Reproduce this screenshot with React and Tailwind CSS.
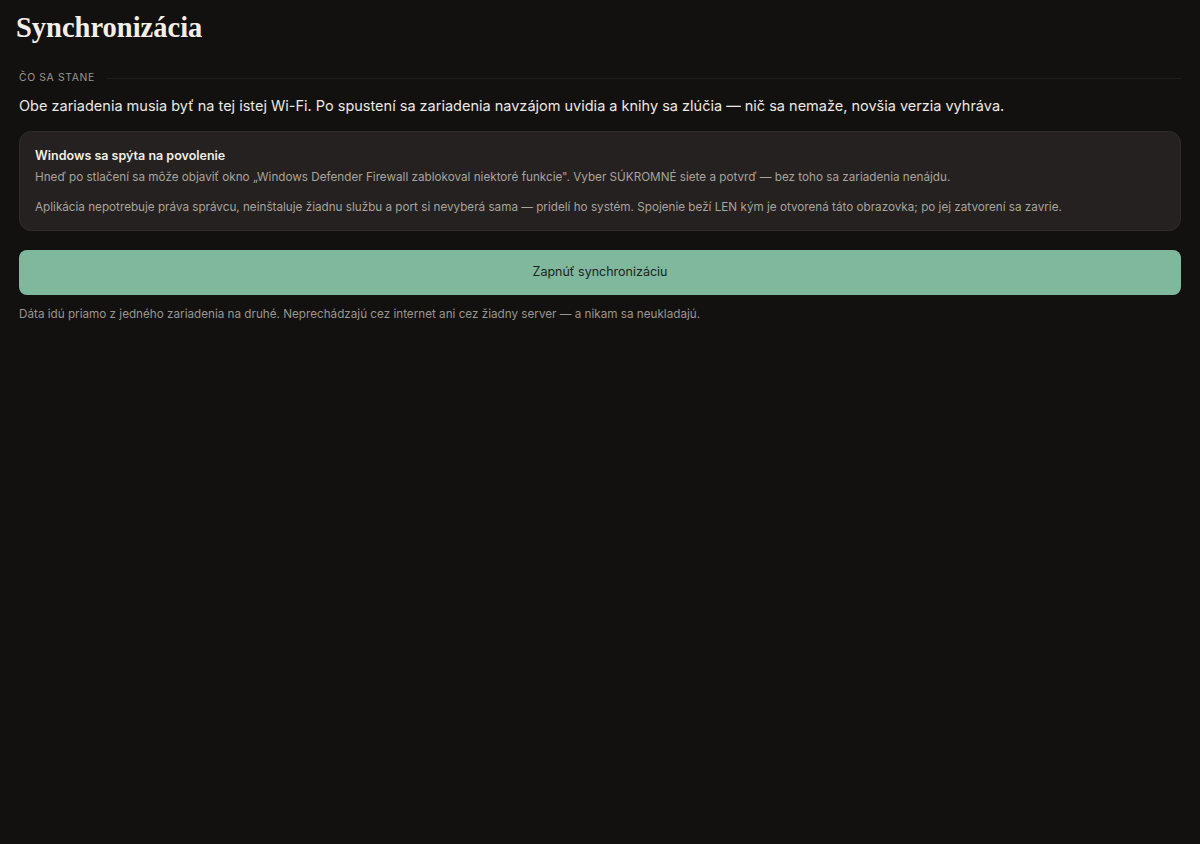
export default function App() {
    const sans = {fontFamily: 'Inter, "Noto Sans", sans-serif'};

    return (
        <div className="min-h-screen bg-[#121110] text-[#ece8e2]" style={sans}>
            <div className="px-[19px] pt-[10px]">
                <h1 className="text-[28.5px] font-bold leading-[36px] -ml-[3px] text-[#f3efe8]"
                    style={{fontFamily: '"Liberation Serif", "DejaVu Serif", serif'}}>
                    Synchronizácia
                </h1>

                <div className="flex items-center gap-3 mt-[24px]">
                    <span className="text-[10.4px] uppercase tracking-[0.06em] text-[#9a958e] leading-4">Čo sa stane</span>
                    <div className="flex-1 h-px bg-[#1f1d1b]"></div>
                </div>

                <p className="text-[14.5px] leading-6 mt-[8px] text-[#ece8e2]">
                    Obe zariadenia musia byť na tej istej Wi-Fi. Po spustení sa zariadenia navzájom uvidia a knihy sa zlúčia — nič sa nemaže, novšia verzia vyhráva.
                </p>

                <div className="mt-[13px] rounded-xl border border-[#2f2c29] bg-[#242120] px-[15px] pt-[14px] pb-[13px]">
                    <h3 className="text-[12.5px] font-semibold leading-5 text-[#f1ede6]">Windows sa spýta na povolenie</h3>
                    <p className="text-[11.7px] leading-5 text-[#a8a39c] mt-[1px]">
                        Hneď po stlačení sa môže objaviť okno „Windows Defender Firewall zablokoval niektoré funkcie". Vyber SÚKROMNÉ siete a potvrď — bez toho sa zariadenia nenájdu.
                    </p>
                    <p className="text-[11.7px] leading-5 text-[#a8a39c] mt-[10px]">
                        Aplikácia nepotrebuje práva správcu, neinštaluje žiadnu službu a port si nevyberá sama — pridelí ho systém. Spojenie beží LEN kým je otvorená táto obrazovka; po jej zatvorení sa zavrie.
                    </p>
                </div>

                <button className="mt-[19px] w-full h-[45px] rounded-lg bg-[#7fb89d] text-[12.5px] text-[#1c2420]">
                    Zapnúť synchronizáciu
                </button>

                <p className="mt-[9px] text-[11.7px] leading-5 text-[#9a958e]">
                    Dáta idú priamo z jedného zariadenia na druhé. Neprechádzajú cez internet ani cez žiadny server — a nikam sa neukladajú.
                </p>
            </div>
        </div>
    );
}
